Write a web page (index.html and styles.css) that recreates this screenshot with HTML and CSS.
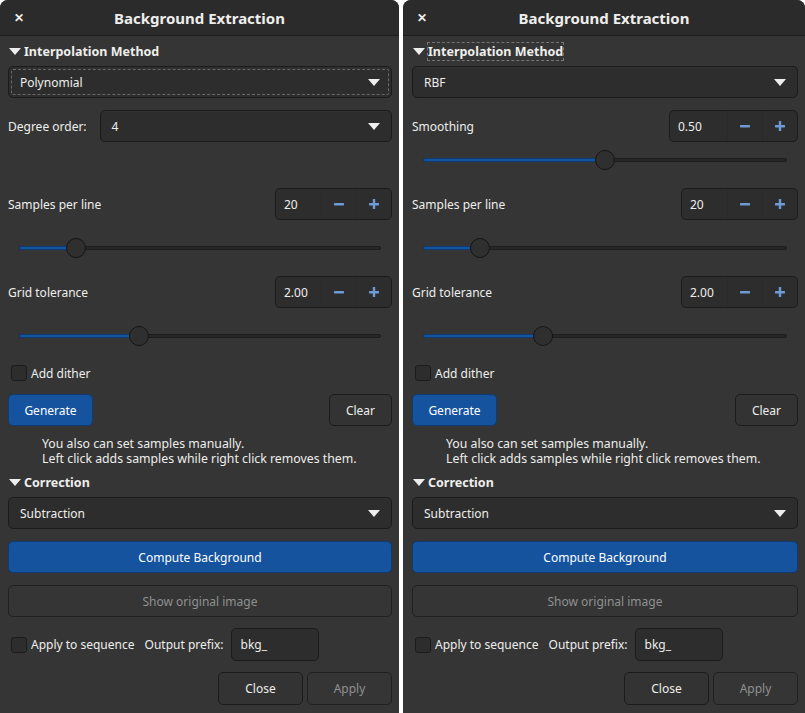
FILE: index.html
```html
<!DOCTYPE html>
<html lang="en">
<head>
<meta charset="utf-8">
<title>Background Extraction</title>
<link rel="stylesheet" href="styles.css">
</head>
<body>
<div class="desk">

  <!-- Polynomial variant -->
  <section class="dialog dialog-left">
    <header class="titlebar">
      <span class="close">&#x2715;</span>
      <h1>Background Extraction</h1>
    </header>
    <div class="content">
      <div class="expander"><span class="arrow"></span>Interpolation Method</div>
      <div class="combo combo-focus">Polynomial<span class="caret"></span></div>
      <div class="row row-degree">
        <span class="label">Degree order:</span>
        <div class="combo combo-degree">4<span class="caret"></span></div>
      </div>
      <div class="slider-gap"></div>
      <div class="row row-spin">
        <span class="label">Samples per line</span>
        <div class="spin"><span class="spin-entry">20</span><span class="spin-btn"><svg width="12" height="12" viewBox="0 0 12 12"><rect x="1" y="5" width="10" height="2.4" rx="0.6"/></svg></span><span class="spin-btn"><svg width="12" height="12" viewBox="0 0 12 12"><rect x="1" y="5" width="10" height="2.4" rx="0.6"/><rect x="4.8" y="1" width="2.4" height="10" rx="0.6"/></svg></span></div>
      </div>
      <div class="slider"><div class="track"><div class="fill" style="width:15.5%"></div><div class="knob" style="left:15.5%"></div></div></div>
      <div class="row row-spin">
        <span class="label">Grid tolerance</span>
        <div class="spin"><span class="spin-entry">2.00</span><span class="spin-btn"><svg width="12" height="12" viewBox="0 0 12 12"><rect x="1" y="5" width="10" height="2.4" rx="0.6"/></svg></span><span class="spin-btn"><svg width="12" height="12" viewBox="0 0 12 12"><rect x="1" y="5" width="10" height="2.4" rx="0.6"/><rect x="4.8" y="1" width="2.4" height="10" rx="0.6"/></svg></span></div>
      </div>
      <div class="slider"><div class="track"><div class="fill" style="width:33%"></div><div class="knob" style="left:33%"></div></div></div>
      <label class="check-row"><span class="check"></span>Add dither</label>
      <div class="row row-buttons">
        <button class="btn btn-blue btn-generate">Generate</button>
        <button class="btn btn-clear">Clear</button>
      </div>
      <p class="hint"><span class="hint-line">You also can set samples manually.</span><span class="hint-line">Left click adds samples while right click removes them.</span></p>
      <div class="expander expander-corr"><span class="arrow"></span>Correction</div>
      <div class="combo combo-corr">Subtraction<span class="caret"></span></div>
      <button class="btn btn-blue btn-wide btn-compute">Compute Background</button>
      <button class="btn btn-wide btn-disabled btn-show">Show original image</button>
      <div class="row row-prefix">
        <label class="check-row check-inline"><span class="check"></span>Apply to sequence</label>
        <span class="label prefix-label">Output prefix:</span>
        <span class="entry">bkg_</span>
      </div>
      <div class="row row-actions">
        <button class="btn btn-action">Close</button>
        <button class="btn btn-action btn-disabled">Apply</button>
      </div>
    </div>
  </section>

  <div class="divider"></div>

  <!-- RBF variant -->
  <section class="dialog dialog-right">
    <header class="titlebar">
      <span class="close">&#x2715;</span>
      <h1>Background Extraction</h1>
    </header>
    <div class="content">
      <div class="expander"><span class="arrow"></span><span class="focus-text">Interpolation Method</span></div>
      <div class="combo">RBF<span class="caret"></span></div>
      <div class="row row-degree">
        <span class="label">Smoothing</span>
        <div class="spin spin-wide"><span class="spin-entry">0.50</span><span class="spin-btn"><svg width="12" height="12" viewBox="0 0 12 12"><rect x="1" y="5" width="10" height="2.4" rx="0.6"/></svg></span><span class="spin-btn"><svg width="12" height="12" viewBox="0 0 12 12"><rect x="1" y="5" width="10" height="2.4" rx="0.6"/><rect x="4.8" y="1" width="2.4" height="10" rx="0.6"/></svg></span></div>
      </div>
      <div class="slider slider-smooth"><div class="track"><div class="fill" style="width:50%"></div><div class="knob" style="left:50%"></div></div></div>
      <div class="row row-spin">
        <span class="label">Samples per line</span>
        <div class="spin"><span class="spin-entry">20</span><span class="spin-btn"><svg width="12" height="12" viewBox="0 0 12 12"><rect x="1" y="5" width="10" height="2.4" rx="0.6"/></svg></span><span class="spin-btn"><svg width="12" height="12" viewBox="0 0 12 12"><rect x="1" y="5" width="10" height="2.4" rx="0.6"/><rect x="4.8" y="1" width="2.4" height="10" rx="0.6"/></svg></span></div>
      </div>
      <div class="slider"><div class="track"><div class="fill" style="width:15.5%"></div><div class="knob" style="left:15.5%"></div></div></div>
      <div class="row row-spin">
        <span class="label">Grid tolerance</span>
        <div class="spin"><span class="spin-entry">2.00</span><span class="spin-btn"><svg width="12" height="12" viewBox="0 0 12 12"><rect x="1" y="5" width="10" height="2.4" rx="0.6"/></svg></span><span class="spin-btn"><svg width="12" height="12" viewBox="0 0 12 12"><rect x="1" y="5" width="10" height="2.4" rx="0.6"/><rect x="4.8" y="1" width="2.4" height="10" rx="0.6"/></svg></span></div>
      </div>
      <div class="slider"><div class="track"><div class="fill" style="width:33%"></div><div class="knob" style="left:33%"></div></div></div>
      <label class="check-row"><span class="check"></span>Add dither</label>
      <div class="row row-buttons">
        <button class="btn btn-blue btn-generate">Generate</button>
        <button class="btn btn-clear">Clear</button>
      </div>
      <p class="hint"><span class="hint-line">You also can set samples manually.</span><span class="hint-line">Left click adds samples while right click removes them.</span></p>
      <div class="expander expander-corr"><span class="arrow"></span>Correction</div>
      <div class="combo combo-corr">Subtraction<span class="caret"></span></div>
      <button class="btn btn-blue btn-wide btn-compute">Compute Background</button>
      <button class="btn btn-wide btn-disabled btn-show">Show original image</button>
      <div class="row row-prefix">
        <label class="check-row check-inline"><span class="check"></span>Apply to sequence</label>
        <span class="label prefix-label">Output prefix:</span>
        <span class="entry">bkg_</span>
      </div>
      <div class="row row-actions">
        <button class="btn btn-action">Close</button>
        <button class="btn btn-action btn-disabled">Apply</button>
      </div>
    </div>
  </section>

</div>
</body>
</html>
```

FILE: styles.css
```css
* { box-sizing: border-box; }

html, body {
  margin: 0;
  padding: 0;
  background: #ffffff;
}

body {
  font-family: "Noto Sans", "Open Sans", sans-serif;
  font-size: 12px;
  color: #eeeeec;
}

.desk {
  display: flex;
  width: 805px;
  height: 713px;
  overflow: hidden;
}

.divider {
  width: 4px;
  flex: none;
  background: #ffffff;
}

.dialog {
  background: #353535;
  border-radius: 8px 8px 0 0;
  display: flex;
  flex-direction: column;
  height: 713px;
  overflow: hidden;
}

.dialog-left { width: 399px; flex: none; }
.dialog-right { flex: 1; }

/* header bar */
.titlebar {
  height: 36px;
  flex: none;
  background: #2b2b2b;
  border-bottom: 1px solid #1c1c1c;
  display: flex;
  align-items: center;
  justify-content: center;
  position: relative;
}

.titlebar h1 {
  margin: 0;
  font-size: 15px;
  font-weight: 700;
  color: #eeeeec;
}

.close {
  position: absolute;
  left: 12px;
  top: 10px;
  width: 13px;
  height: 15px;
  font-size: 12px;
  font-weight: 700;
  line-height: 15px;
  text-align: center;
  color: #eeeeec;
}

.content {
  display: flex;
  flex-direction: column;
  padding: 0 7px 0 8px;
}

.dialog-right .content { padding: 0 7px 0 9px; }

/* expander headings */
.expander {
  height: 20px;
  margin-top: 5px;
  display: flex;
  align-items: center;
  font-weight: 700;
  font-size: 12.5px;
}

.arrow {
  width: 0;
  height: 0;
  border-left: 6px solid transparent;
  border-right: 6px solid transparent;
  border-top: 7px solid #eeeeec;
  margin: 0 3px 0 1px;
}

.focus-text {
  outline: 1px dashed rgba(238, 238, 236, 0.35);
  outline-offset: 0;
}

.expander-corr { margin-top: 6px; }

/* combo boxes */
.combo {
  height: 32px;
  margin-top: 5px;
  background: #2d2d2d;
  border: 1px solid #1b1b1b;
  border-radius: 5px;
  display: flex;
  align-items: center;
  padding: 0 11px;
  position: relative;
  box-shadow: inset 0 1px rgba(255, 255, 255, 0.02);
}

.combo-focus {
  outline: 1px dashed rgba(238, 238, 236, 0.3);
  outline-offset: -4px;
}

.caret {
  margin-left: auto;
  width: 0;
  height: 0;
  border-left: 6px solid transparent;
  border-right: 6px solid transparent;
  border-top: 7px solid #eeeeec;
}

.combo-corr { margin-top: 5px; }

.row {
  display: flex;
  align-items: center;
}

.label { color: #eeeeec; }

.row-degree {
  margin-top: 12px;
  height: 32px;
  justify-content: space-between;
}

.combo-degree {
  margin: 0 0 0 13px;
  flex: 1;
}

/* room left where the RBF dialog shows its smoothing slider */
.slider-gap { height: 30px; flex: none; }

.row-spin {
  margin-top: 16px;
  height: 32px;
  justify-content: space-between;
}

/* spin buttons */
.spin {
  display: flex;
  height: 32px;
  width: 117px;
  background: #2d2d2d;
  border: 1px solid #1b1b1b;
  border-radius: 5px;
  overflow: hidden;
}

.spin-wide { width: 129px; }

.spin-entry {
  flex: 1;
  display: flex;
  align-items: center;
  padding-left: 8px;
}

.spin-btn {
  width: 35px;
  flex: none;
  display: flex;
  align-items: center;
  justify-content: center;
  border-left: 1px solid #2a2a2a;
}

.spin-btn svg { fill: #6e9bd6; }

/* sliders */
.slider {
  height: 24px;
  margin-top: 16px;
  padding: 0 11px;
  display: flex;
  align-items: center;
}

.slider-smooth { margin-top: 6px; }

.track {
  position: relative;
  flex: 1;
  height: 4px;
  background: #272727;
  border: 1px solid #1c1c1c;
  border-radius: 3px;
}

.fill {
  position: absolute;
  left: -1px;
  top: -1px;
  height: 4px;
  background: #15539e;
  border: 1px solid #0f3b71;
  border-radius: 3px 0 0 3px;
}

.knob {
  position: absolute;
  top: -9px;
  width: 20px;
  height: 20px;
  margin-left: -10px;
  border-radius: 50%;
  background: #2f2f2f;
  border: 1px solid #151515;
}

/* check buttons */
.check-row {
  display: flex;
  align-items: center;
  height: 18px;
  margin-top: 16px;
}

.check {
  width: 16px;
  height: 16px;
  margin: 0 4px 0 3px;
  background: #2d2d2d;
  border: 1px solid #1b1b1b;
  border-radius: 3px;
}

.check-inline { margin-top: 0; }

/* buttons */
.btn {
  font-family: inherit;
  font-size: 12px;
  color: #eeeeec;
  background: #333333;
  border: 1px solid #1b1b1b;
  border-radius: 5px;
  height: 32px;
  padding: 0;
  margin: 0;
}

.btn-blue {
  background: #15539e;
  border-color: #0f3b71;
  color: #ffffff;
}

.row-buttons {
  margin-top: 12px;
  justify-content: space-between;
}

.btn-generate { width: 85px; }
.btn-clear { width: 63px; margin-right: 0; }

.hint {
  margin: 10px 0 0 34px;
  font-size: 12.3px;
  display: flex;
  flex-direction: column;
}

.hint-line {
  display: block;
  height: 15px;
  line-height: 15px;
}

.btn-wide { width: 100%; }
.btn-compute { margin-top: 12px; }
.btn-show { margin-top: 12px; }

.btn-disabled {
  color: #8f9190;
  background: #353535;
  border-color: #202020;
}

.row-prefix {
  margin-top: 11px;
  height: 33px;
}

.prefix-label { margin-left: 10px; }

.entry {
  margin-left: 7px;
  width: 88px;
  height: 33px;
  background: #2d2d2d;
  border: 1px solid #1b1b1b;
  border-radius: 5px;
  display: flex;
  align-items: center;
  padding-left: 9px;
}

.row-actions {
  margin-top: 11px;
  justify-content: flex-end;
  gap: 4px;
}

.btn-action {
  width: 85px;
  height: 33px;
}
```
